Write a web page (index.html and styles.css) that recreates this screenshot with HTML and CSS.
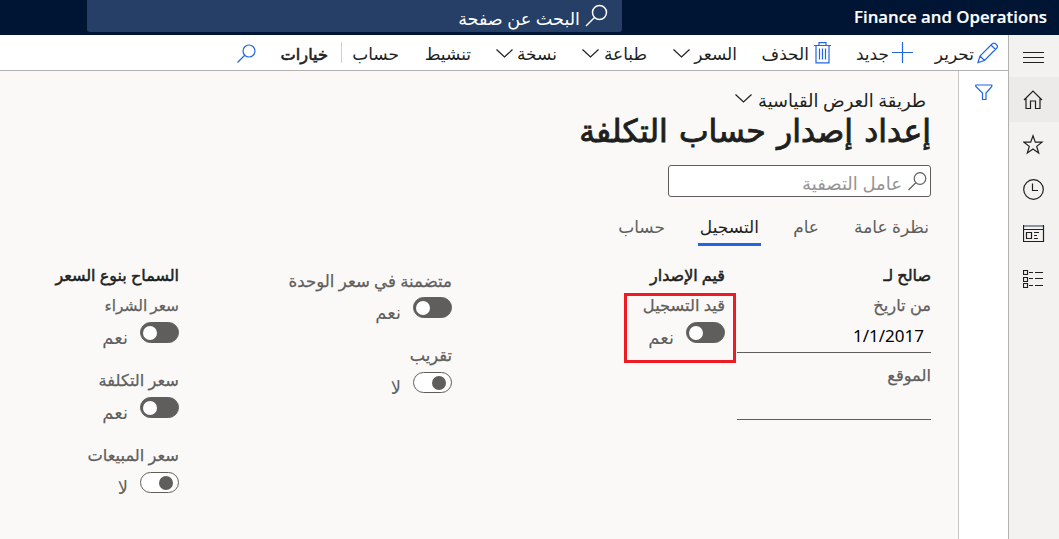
FILE: index.html
```html
<!DOCTYPE html>
<html lang="ar" dir="rtl">
<head>
<meta charset="utf-8">
<title>Finance and Operations</title>
<link rel="stylesheet" href="styles.css">
</head>
<body>
<header class="topbar">
  <div class="brand" dir="ltr">Finance and Operations</div>
  <div class="page-search">
    <svg class="page-search-icon" width="24" height="24" viewBox="0 0 24 24"><circle cx="14.5" cy="8.5" r="7"/><path d="M9.5 13.5 1 22"/></svg>
    <span>البحث عن صفحة</span>
  </div>
</header>
<div class="shell">
  <nav class="rail">
    <a class="rail-item menu"><svg width="22" height="22" viewBox="0 0 22 22"><path d="M0 5.500h21M0 10.500h21M0 15.500h21"/></svg></a>
    <a class="rail-item home"><svg width="22" height="22" viewBox="0 0 22 22"><path d="M1 11 10 2l9 9M3 9.500V19.500h4.500V12h5v7.500H17V9.500"/></svg></a>
    <a class="rail-item"><svg width="22" height="22" viewBox="0 0 22 22"><path d="m10 1.800 2.300 6.400H19l-5.300 4.200 2 6.700L10 15.100l-5.700 4 2-6.700L1 8.200h6.700z"/></svg></a>
    <a class="rail-item"><svg width="22" height="22" viewBox="0 0 22 22"><circle cx="10.500" cy="10.500" r="9.800"/><path d="M9.500 4.500v7H15"/></svg></a>
    <a class="rail-item"><svg width="22" height="22" viewBox="0 0 22 22"><path class="soft" d="M0 2h21"/><path d="M.5 1v16.500h20V1M.5 5.500h20M3.500 8.500h5v6h-5zM11 8.500h5M11 11.500h3M11 14.500h4"/></svg></a>
    <a class="rail-item"><svg width="22" height="22" viewBox="0 0 22 22"><path d="M.5 1.500h4v4h-4zM.5 8.500h4v4h-4zM.5 14.500h4v4h-4zM6 3.500h4M12 3.500h8M6 9.500h4M12 9.500h8M6 16.500h4M12 16.500h8"/></svg></a>
  </nav>
  <main class="workspace">
    <div class="toolbar">
      <svg class="blue pencil" width="22" height="22" viewBox="0 0 22 22"><path d="M1 20.500 3 14 15.500 1.500q1.500-1 3 .2l1.300 1.300q1.300 1.500 0 3L7.500 18.500zM3 14l4.500 4.500M14 3l4.500 4.500"/></svg>
      <span class="cmd edit">تحرير</span>
      <svg class="blue plus" width="22" height="22" viewBox="0 0 22 22"><path d="M10.500 0v21M0 10.500h21"/></svg>
      <span class="cmd new">جديد</span>
      <svg class="blue trash" width="17" height="22" viewBox="0 0 17 22"><path d="M0 3.500h17M5 3.500V.700h7v2.800M2 3.500v17.300h13V3.500M5.500 6.500v11M8.500 6.500v11M11.500 6.500v11"/></svg>
      <span class="cmd delete">الحذف</span>
      <span class="cmd price">السعر</span>
      <svg class="chev" width="17" height="9" viewBox="0 0 17 9"><path d="m.5.500 8 7.500 8-7.500"/></svg>
      <span class="cmd print">طباعة</span>
      <svg class="chev" width="17" height="9" viewBox="0 0 17 9"><path d="m.5.500 8 7.500 8-7.500"/></svg>
      <span class="cmd copy">نسخة</span>
      <svg class="chev" width="17" height="9" viewBox="0 0 17 9"><path d="m.5.500 8 7.500 8-7.500"/></svg>
      <span class="cmd activate">تنشيط</span>
      <span class="cmd calc">حساب</span>
      <i class="divider"></i>
      <span class="cmd options">خيارات</span>
      <svg class="blue find" width="19" height="20" viewBox="0 0 19 20"><circle cx="12" cy="7" r="6"/><path d="M7.500 11.500.5 18.500"/></svg>
    </div>
    <div class="body">
      <aside class="filter-pane">
        <svg class="blue" width="18" height="17" viewBox="0 0 18 17"><path d="M.8 1h16v1.500L11 9v6.500H7.500V9L.8 2.500z"/></svg>
      </aside>
      <section class="content">
        <div class="view"><span class="view-name">طريقة العرض القياسية</span><svg class="chev" width="17" height="9" viewBox="0 0 17 9"><path d="m.5.500 8 7.500 8-7.500"/></svg></div>
        <h1 class="title">إعداد إصدار حساب التكلفة</h1>
        <div class="filter">
          <svg width="19" height="19" viewBox="0 0 19 19"><circle cx="12" cy="6.500" r="5.800"/><path d="M7.800 10.800.5 18"/></svg>
          <span>عامل التصفية</span>
        </div>
        <div class="tabs">
          <a class="tab overview">نظرة عامة</a>
          <a class="tab general">عام</a>
          <a class="tab posting active">التسجيل</a>
          <a class="tab calculation">حساب</a>
        </div>
        <div class="fields">
          <div class="col">
            <h2 class="group">صالح لـ</h2>
            <div class="label">من تاريخ</div>
            <div class="input" dir="ltr">1/1/2017</div>
            <div class="label site">الموقع</div>
            <div class="input blank"></div>
          </div>
          <div class="col">
            <h2 class="group">قيم الإصدار</h2>
            <div class="field marked">
              <div class="label">قيد التسجيل</div>
              <div class="switch"><i class="track on"></i><span class="state">نعم</span></div>
              <i class="marker"></i>
            </div>
          </div>
          <div class="col offset">
            <div class="field">
              <div class="label unit">متضمنة في سعر الوحدة</div>
              <div class="switch"><i class="track on"></i><span class="state">نعم</span></div>
            </div>
            <div class="field">
              <div class="label">تقريب</div>
              <div class="switch"><i class="track"></i><span class="state">لا</span></div>
            </div>
          </div>
          <div class="col">
            <h2 class="group">السماح بنوع السعر</h2>
            <div class="field">
              <div class="label purchase">سعر الشراء</div>
              <div class="switch"><i class="track on"></i><span class="state">نعم</span></div>
            </div>
            <div class="field">
              <div class="label">سعر التكلفة</div>
              <div class="switch"><i class="track on"></i><span class="state">نعم</span></div>
            </div>
            <div class="field">
              <div class="label">سعر المبيعات</div>
              <div class="switch"><i class="track"></i><span class="state">لا</span></div>
            </div>
          </div>
        </div>
      </section>
    </div>
  </main>
</div>
</body>
</html>
```
FILE: styles.css
```css
* { box-sizing: border-box; }
body {
  margin: 0;
  width: 1059px;
  height: 539px;
  overflow: hidden;
  background: #faf9f8;
  color: #201f1e;
  font-family: "Noto Sans", "DejaVu Sans", sans-serif;
  font-size: 17px;
  white-space: nowrap;
}
svg { display: block; flex: none; fill: none; stroke: #201f1e; stroke-width: 1.2; }
h1, h2 { margin: 0; }

.topbar { display: flex; height: 35px; background: #001433; color: #fff; }
.brand { width: 194px; margin-right: 12px; font: 600 16.8px/34px "Open Sans", sans-serif; text-align: right; direction: rtl; -webkit-text-stroke: .2px; }
.page-search {
  display: flex;
  width: 535px;
  height: 32px;
  margin-right: 231px;
  padding-right: 13px;
  border-radius: 0 0 3px 3px;
  background: #263f66;
  font-size: 17.6px;
  line-height: 36px;
  gap: 5px;
}
.page-search-icon { margin-top: 4px; stroke: #fff; stroke-width: 1.5; }

.shell { display: flex; height: 504px; }
.rail { width: 51px; border-left: 1px solid #b3b0ad; background: #f3f2f1; }
.rail-item { display: flex; align-items: center; height: 45px; padding-right: 14px; }
.rail-item.menu { height: 42px; padding-top: 3px; }
.rail-item.home { background: #edebe9; }
.rail .soft { stroke: #87979f; stroke-width: 2; }

.workspace { width: 1008px; }
.toolbar { display: flex; height: 36px; padding-right: 9px; border-bottom: 1px solid #b3b0ad; background: #fff; }
.blue { stroke: #2266e3; }
.pencil, .plus { margin-top: 7px; }
.trash { margin-top: 7px; }
.cmd { line-height: 38px; }
.edit { width: 41px; margin: 0 3px 0 19px; }
.new { width: 35px; margin: 0 3px 0 23px; }
.delete { width: 47px; margin: 0 5px 0 25px; }
.price { width: 42px; margin-left: 5px; }
.toolbar .chev { margin-top: 14px; }
.print { width: 43px; margin: 0 26px 0 5px; }
.copy { width: 39px; margin: 0 25px 0 5px; }
.activate { width: 48px; margin: 0 25px 0 24px; }
.calc { width: 46px; }
.divider { width: 1px; height: 21px; margin: 7px 11px 0 13px; background: #d2d0ce; }
.options { width: 47px; font-size: 16.2px; -webkit-text-stroke: .6px; margin-left: 25px; }
.find { margin-top: 9px; }

.body { display: flex; height: 468px; }
.filter-pane { width: 50px; padding: 13px 15px 0 0; border-left: 1px solid #c8c6c4; background: #fff; }
.content { width: 958px; padding: 18px 27px 0 0; }
.view { display: flex; height: 24px; padding-right: 5px; font-size: 17.9px; line-height: 22px; }
.view-name { width: 169px; margin-left: 5px; }
.view .chev { margin-top: 5px; }
.title { height: 36px; font-size: 31.5px; font-weight: normal; line-height: 34px; word-spacing: 3px; -webkit-text-stroke: .9px; }
.filter {
  display: flex;
  width: 263px;
  height: 32px;
  margin-top: 16px;
  padding: 6px 3px 0 0;
  border: 1px solid #605e5c;
  border-radius: 3px;
  background: #fff;
  color: #979593;
  font-size: 18px;
  line-height: 22px;
  gap: 6px;
}
.filter svg { stroke: #605e5c; }
.tabs { display: flex; height: 49px; color: #605e5c; line-height: 60px; }
.overview { width: 75px; margin: 0 2px 0 35px; }
.general { width: 25px; margin-left: 33px; }
.posting { width: 63px; padding-right: 2px; border-bottom: 3px solid #2266e3; color: #201f1e; }
.calculation { margin-right: 33px; }

.fields { display: grid; grid-template-columns: 194px 261px 261px 180px; column-gap: 12px; padding-top: 18px; }
.group { height: 30px; font-size: 16px; font-weight: normal; line-height: 22px; -webkit-text-stroke: .5px; }
.label { height: 28px; color: #605e5c; font-size: 16.3px; line-height: 23px; -webkit-text-stroke: .25px; }
.unit { font-size: 16.6px; }
.purchase { font-size: 15.4px; word-spacing: -1px; }
.input { height: 31px; padding-right: 7px; border-bottom: 1px solid #605e5c; color: #000; line-height: 28px; text-align: right; }
.site { height: 27px; margin-top: 11px; }
.input.blank { height: 29px; }
.offset { padding-top: 5px; }
.field { height: 75px; }
.marked { position: relative; }
.marker { position: absolute; top: -1px; right: -11px; width: 112px; height: 70px; border: 3px solid #ed1c24; }
.switch { display: flex; gap: 12px; color: #605e5c; }
.track { position: relative; width: 39px; height: 21px; border: 1px solid #605e5c; border-radius: 11px; background: #fff; }
.track::after { content: ""; position: absolute; top: 3px; right: 5px; width: 14px; height: 14px; border-radius: 50%; background: #605e5c; }
.track.on { background: #605e5c; }
.track.on::after { right: auto; left: 2px; background: #fff; }
.state { height: 21px; font-size: 18px; line-height: 30px; }
```
